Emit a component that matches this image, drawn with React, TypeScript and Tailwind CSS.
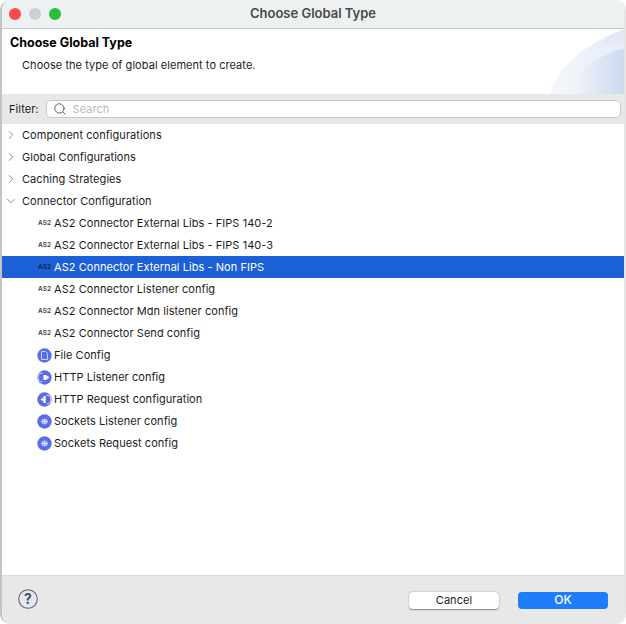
import { ChevronDown, ChevronRight, Search } from 'lucide-react';

const as2Rows = [
    'AS2 Connector External Libs - FIPS 140-2',
    'AS2 Connector External Libs - FIPS 140-3',
    'AS2 Connector External Libs - Non FIPS',
    'AS2 Connector Listener config',
    'AS2 Connector Mdn listener config',
    'AS2 Connector Send config',
];

function Banner() {
    return (
        <svg className="absolute right-0 top-0" width="74" height="65" viewBox="0 0 74 65">
            <defs>
                <linearGradient id="back" x1="0" x2="1" y1="0" y2="0">
                    <stop offset="0" stopColor="#f6f7fc" />
                    <stop offset="1" stopColor="#e6ebf8" />
                </linearGradient>
                <linearGradient id="front" x1="0" x2="1" y1="0" y2="0">
                    <stop offset="0" stopColor="#f4f6fb" />
                    <stop offset="1" stopColor="#cdd9f0" />
                </linearGradient>
            </defs>
            <path d="M0 65 C7 38 36 14 74 0 V65 Z" fill="url(#back)" />
            <path d="M50 16 C56 10 64 4 74 0 V12 C66 13 58 14 50 16 Z" fill="#e2e8f7" />
            <path d="M18 65 C22 48 44 26 74 20 V65 Z" fill="url(#front)" />
        </svg>
    );
}

function As2Icon({ selected }: { selected?: boolean }) {
    return (
        <span className={`w-[15px] text-[6.5px] leading-none text-center font-semibold ${selected ? 'text-[#10204a]' : 'text-[#444]'}`}>
            AS2
        </span>
    );
}

function BlueIcon({ kind }: { kind: 'file' | 'listener' | 'request' | 'socket' }) {
    return (
        <svg width="15" height="15" viewBox="0 0 15 15" className="flex-shrink-0">
            <circle cx="7.500" cy="7.500" r="7.200" fill="#5a6ce8" />
            {kind === 'file' && <path d="M4.500 3.500h4l2 2v6h-6z" fill="none" stroke="#d4d9fa" strokeWidth="0.9" />}
            {kind === 'listener' && (
                <>
                    <path d="M5.500 3A4.500 4.500 0 0 0 5.500 12" fill="none" stroke="#d4d9fa" strokeWidth="1.100" />
                    <rect x="6.500" y="5" width="3" height="5" fill="#fff" />
                    <path d="M9.500 5.500l3 2-3 2z" fill="#fff" />
                </>
            )}
            {kind === 'request' && (
                <>
                    <path d="M9.500 3A4.500 4.500 0 0 1 9.500 12" fill="none" stroke="#d4d9fa" strokeWidth="1.100" />
                    <rect x="6.500" y="4" width="2.200" height="7" fill="#fff" />
                    <path d="M6.500 5.500l-3 2 3 2z" fill="#fff" />
                </>
            )}
            {kind === 'socket' && (
                <>
                    <ellipse cx="7.500" cy="7.500" rx="3.400" ry="3" fill="#a9b3f3" />
                    <path d="M4.500 7.500h6M7.500 5v5" stroke="#e4e7fc" strokeWidth="0.800" />
                </>
            )}
        </svg>
    );
}

function GroupRow({ label, open }: { label: string; open?: boolean }) {
    return (
        <div className="h-[22px] flex items-center pl-[2px]">
            {open ? (
                <ChevronDown size={14} strokeWidth={1.4} className="text-[#777] mr-[4px]" />
            ) : (
                <ChevronRight size={14} strokeWidth={1.4} className="text-[#777] mr-[4px]" />
            )}
            <span>{label}</span>
        </div>
    );
}

function ChildRow({ label, icon, selected }: { label: string; icon: React.ReactNode; selected?: boolean }) {
    return (
        <div className={`h-[22px] flex items-center pl-[35px] gap-[2px] ${selected ? 'bg-[#1c60d8] text-white' : ''}`}>
            {icon}
            <span>{label}</span>
        </div>
    );
}

export default function App() {
    return (
        <div className="w-[626px] h-[624px] flex flex-col overflow-hidden rounded-[10px] bg-white border-l-2 border-r-2 border-l-[#c4c4c4] border-r-[#e6e6e6] text-[11px] tracking-[0.05px] text-[#1c1c1c] font-['Inter','Liberation_Sans',sans-serif]">
            {/* Title Bar */}
            <div className="h-[29px] flex-shrink-0 flex items-center justify-center relative bg-[#eef1f2] border-b border-[#c9c9c9]">
                <div className="absolute left-[7px] top-[8px] flex gap-[8px]">
                    <span className="w-[12px] h-[12px] rounded-full bg-[#fb4a4c]" />
                    <span className="w-[12px] h-[12px] rounded-full bg-[#cdd0d2]" />
                    <span className="w-[12px] h-[12px] rounded-full bg-[#2bbd3d]" />
                </div>
                <span className="font-semibold text-[13px] tracking-normal text-[#4a4a4a]">Choose Global Type</span>
            </div>

            {/* Header */}
            <div className="h-[65px] flex-shrink-0 relative bg-white pl-[8px] pt-[6px]">
                <div className="font-bold text-[12.5px] tracking-normal text-black leading-[16px]">Choose Global Type</div>
                <div className="pl-[12px] mt-[6px] leading-[16px]">Choose the type of global element to create.</div>
                <Banner />
            </div>

            {/* Filter */}
            <div className="h-[30px] flex-shrink-0 flex items-center bg-[#e8e8e8] pl-[7px] pr-[3px] gap-[7px]">
                <span>Filter:</span>
                <div className="flex-1 h-[18px] flex items-center bg-white rounded-[5px] border border-[#c8c8c8] pl-[6px] gap-[6px]">
                    <Search size={14} strokeWidth={1.6} className="text-[#555]" />
                    <span className="text-[#b8b8b8]">Search</span>
                </div>
            </div>

            {/* Tree */}
            <div className="flex-1 bg-white">
                <GroupRow label="Component configurations" />
                <GroupRow label="Global Configurations" />
                <GroupRow label="Caching Strategies" />
                <GroupRow label="Connector Configuration" open />
                {as2Rows.map((label, i) => (
                    <ChildRow key={label} label={label} selected={i === 2} icon={<As2Icon selected={i === 2} />} />
                ))}
                <ChildRow label="File Config" icon={<BlueIcon kind="file" />} />
                <ChildRow label="HTTP Listener config" icon={<BlueIcon kind="listener" />} />
                <ChildRow label="HTTP Request configuration" icon={<BlueIcon kind="request" />} />
                <ChildRow label="Sockets Listener config" icon={<BlueIcon kind="socket" />} />
                <ChildRow label="Sockets Request config" icon={<BlueIcon kind="socket" />} />
            </div>

            {/* Footer */}
            <div className="h-[49px] flex-shrink-0 flex items-center bg-[#e8e8e8] border-t border-[#dcdcdc] pl-[16px] pr-[16px]">
                <svg width="20" height="20" viewBox="0 0 20 20" className="mb-[2px]">
                    <circle cx="10" cy="10" r="9.300" fill="none" stroke="#4f6485" strokeWidth="1.100" />
                    <text x="10" y="15" textAnchor="middle" fontSize="14" fontWeight="700" fill="#3c5274" fontFamily="Inter">?</text>
                </svg>
                <div className="ml-auto flex gap-[19px]">
                    <button type="button" className="w-[90px] h-[17px] bg-white rounded-[4px] shadow-[0_0.5px_1.5px_rgba(0,0,0,0.45)] leading-none">Cancel</button>
                    <button type="button" className="w-[90px] h-[17px] bg-[#1f7cfa] text-white text-[12px] font-medium rounded-[4px] leading-none">OK</button>
                </div>
            </div>
        </div>
    );
}
